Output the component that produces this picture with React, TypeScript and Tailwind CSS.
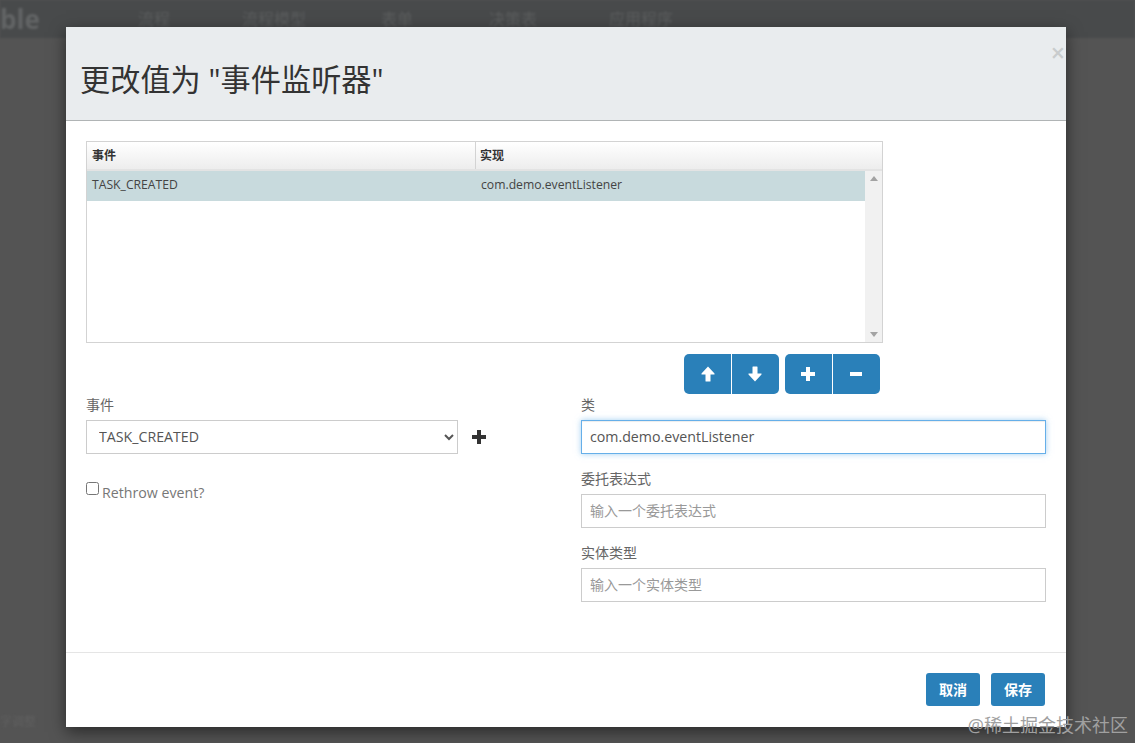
const fontStack = { fontFamily: '"Open Sans", "Noto Sans CJK SC", sans-serif' };

function ArrowUp() {
  return (
    <svg width="14" height="16" viewBox="0 0 14 16" fill="white">
      <path d="M7 0.5 L13.5 7.5 V8.5 H9.5 V15 Q9.5 15.5 9 15.5 H5 Q4.5 15.5 4.5 15 V8.5 H0.5 V7.5 Z" />
    </svg>
  );
}

function ArrowDown() {
  return (
    <svg width="14" height="16" viewBox="0 0 14 16" fill="white">
      <path d="M7 15.5 L13.5 8.5 V7.5 H9.5 V1 Q9.5 0.5 9 0.5 H5 Q4.5 0.5 4.5 1 V7.5 H0.5 V8.5 Z" />
    </svg>
  );
}

function PlusIcon({ color = 'white' }: { color?: string }) {
  return (
    <svg width="14" height="14" viewBox="0 0 14 14" fill={color}>
      <path d="M5 0 H9 V5 H14 V9 H9 V14 H5 V9 H0 V5 H5 Z" />
    </svg>
  );
}

function MinusIcon() {
  return (
    <svg width="14" height="14" viewBox="0 0 14 14" fill="white">
      <path d="M1 5 H13 V9 H1 Z" />
    </svg>
  );
}

function ToolButton({ children, className }: { children: React.ReactNode; className: string }) {
  return (
    <button className={'w-[47px] h-10 bg-[#2a80b9] flex items-center justify-center ' + className}>{children}</button>
  );
}

function Field({ label, placeholder }: { label: string; placeholder: string }) {
  return (
    <div className="mt-[15px]">
      <label className="block text-[14px] leading-[20px] text-[#666] mb-[5px]">{label}</label>
      <input
        readOnly
        placeholder={placeholder}
        className="w-full h-[34px] border border-[#ccc] px-2 pb-[2px] text-[14px] bg-white placeholder:text-[#999]"
      />
    </div>
  );
}

export default function App() {
  return (
    <div className="relative w-[1135px] h-[743px] overflow-hidden bg-[#545454]" style={fontStack}>
      {/* dimmed page behind the dialog */}
      <div className="h-[38px] bg-[#484a4b] flex items-center text-[16px] text-[#5b5d5e] blur-[1px]">
        <span className="w-[138px] text-[26px] font-bold text-[#626465]">ble</span>
        <span className="w-[104px]">流程</span>
        <span className="w-[139px]">流程模型</span>
        <span className="w-[108px]">表单</span>
        <span className="w-[120px]">决策表</span>
        <span>应用程序</span>
      </div>
      <div className="absolute left-0 bottom-[12px] text-[12px] text-[#606060] blur-[1px]">字调整</div>

      <div className="absolute left-[66px] top-[27px] w-[1000px] h-[700px] bg-white flex flex-col shadow-[0_5px_15px_rgba(0,0,0,0.5)]">
        <div className="relative h-[94px] shrink-0 bg-[#e9ecee] border-b border-[#b0b4b5] pl-[14px] pt-[32px]">
          <h1 className="text-[30.2px] leading-[42px] text-[#333]">更改值为 "事件监听器"</h1>
          <span className="absolute right-[1px] top-[13px] text-[25px] leading-[25px] font-semibold text-[#c9cccd]">×</span>
        </div>

        <div className="flex-1 px-5 pt-5">
          <div className="w-[797px] h-[202px] border border-[#d3d3d3] flex flex-col">
            <div className="h-[29px] shrink-0 flex text-[12px] font-bold text-[#333] bg-gradient-to-b from-white to-[#ededed] border-b-2 border-[#e3e3e3]">
              <div className="w-[389px] pl-[5px] pt-px border-r border-[#d3d3d3] flex items-center">事件</div>
              <div className="pl-[4px] pt-px flex items-center">实现</div>
            </div>
            <div className="flex-1 flex">
              <div className="flex-1">
                <div className="h-[30px] pb-px flex items-center bg-[#c8dadd] text-[12.2px] text-[#444]">
                  <span className="w-[389px] pl-[5px]">TASK_CREATED</span>
                  <span className="pl-[5px]">com.demo.eventListener</span>
                </div>
              </div>
              <div className="w-[17px] bg-[#f1f1f1] flex flex-col items-center justify-between py-[5px]">
                <span className="w-0 h-0 border-x-[4px] border-x-transparent border-b-[5px] border-b-[#a3a3a3]" />
                <span className="w-0 h-0 border-x-[4px] border-x-transparent border-t-[5px] border-t-[#a3a3a3]" />
              </div>
            </div>
          </div>

          <div className="w-[794px] mt-[11px] flex justify-end gap-[6px]">
            <div className="flex gap-px">
              <ToolButton className="rounded-l-[5px]"><ArrowUp /></ToolButton>
              <ToolButton className="rounded-r-[5px] pr-[2px]"><ArrowDown /></ToolButton>
            </div>
            <div className="flex gap-px">
              <ToolButton className="rounded-l-[5px] pr-[2px]"><PlusIcon /></ToolButton>
              <ToolButton className="rounded-r-[5px] pr-[2px]"><MinusIcon /></ToolButton>
            </div>
          </div>

          <div className="flex mt-[1px]">
            <div className="w-[495px] shrink-0">
              <label className="block text-[14px] leading-[20px] text-[#666] mb-[5px]">事件</label>
              <div className="flex items-center">
                <select className="w-[372px] h-[34px] border border-[#ccc] bg-white pl-2 pb-[2px] text-[14.2px] text-[#555]">
                  <option>TASK_CREATED</option>
                </select>
                <span className="ml-[14px]"><PlusIcon color="#333" /></span>
              </div>
              <label className="flex items-start mt-[28px] text-[14.2px] text-[#777]">
                <input type="checkbox" className="w-[13px] h-[13px] m-0" />
                <span className="ml-[3px] leading-[20px] mt-[1px]">Rethrow event?</span>
              </label>
            </div>
            <div className="w-[465px] shrink-0">
              <label className="block text-[14px] leading-[20px] text-[#666] mb-[5px]">类</label>
              <input
                readOnly
                value="com.demo.eventListener"
                className="w-full h-[34px] border border-[#66afe9] shadow-[inset_0_1px_1px_rgba(0,0,0,0.075),0_0_6px_rgba(102,175,233,0.6)] px-2 pb-[2px] text-[14.2px] text-[#555] bg-white outline-none"
              />
              <Field label="委托表达式" placeholder="输入一个委托表达式" />
              <Field label="实体类型" placeholder="输入一个实体类型" />
            </div>
          </div>
        </div>

        <div className="h-[75px] shrink-0 border-t border-[#e5e5e5] flex justify-end gap-[11px] pr-[21px] pt-5">
          <button className="w-[54px] h-[33px] rounded-[3px] bg-[#2a80b9] text-white text-[14px] font-semibold">取消</button>
          <button className="w-[54px] h-[33px] rounded-[3px] bg-[#2a80b9] text-white text-[14px] font-semibold">保存</button>
        </div>
      </div>

      <div className="absolute right-[7px] bottom-[6px] text-[18px] leading-[24px] text-[#a0a0a0]">@稀土掘金技术社区</div>
    </div>
  );
}
